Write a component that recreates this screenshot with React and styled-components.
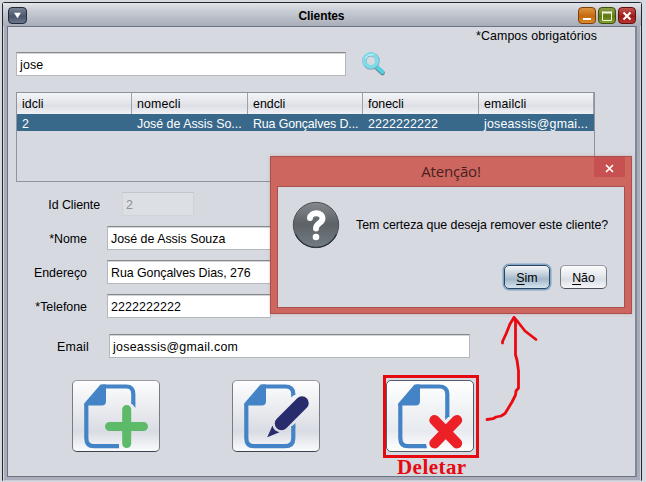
import React from "react";
import styled, { createGlobalStyle, css } from "styled-components";

const GlobalStyle = createGlobalStyle`
  * { box-sizing: border-box; }
  html, body { margin: 0; padding: 0; overflow: hidden; }
  body {
    background: #d6d9e0;
    font: 12.4px/14px "Liberation Sans", Arial, sans-serif;
    color: #000;
  }
  svg { display: block; }
`;

const Screen = styled.main`
  position: relative;
  width: 646px;
  height: 482px;
  padding: 2px 0 0 2px;
  overflow: hidden;
`;

const Frame = styled.section`
  display: flex;
  flex-direction: column;
  width: 640px;
  height: 479px;
  border: 1px solid #23272e;
  border-bottom: 1px solid #c9ccd4;
  border-radius: 3px 3px 0 0;
  background: #a8adb9;
  box-shadow: inset 1px 0 #d3d6dc, inset -1px 0 #d3d6dc;
`;

const TitleBar = styled.header`
  display: grid;
  grid-template-columns: 58px 1fr 58px;
  align-items: center;
  height: 23px;
  padding: 0 5px;
  background: linear-gradient(#e3e5e9, #c8ccd4 35%, #a8adb8);
`;

const Title = styled.h1`
  margin: 3px 0 0 -1px;
  font-size: 12px;
  line-height: 14px;
  letter-spacing: -0.1px;
  text-align: center;
`;

const tones = {
  slate: ["#7a8495", "#4b566b", "#6b778c", "#1f2a3d"],
  orange: ["#dd9440", "#c4690f", "#dd8a2c", "#7e3f08"],
  green: ["#8ea04a", "#5f7a12", "#86a12c", "#3c4f0b"],
  red: ["#c25450", "#9e1b17", "#b8342e", "#5f0f0d"],
};

const FrameButton = styled.button`
  display: grid;
  place-items: center;
  width: ${(p) => (p.$tone === "slate" ? 19 : 18)}px;
  height: 17px;
  margin-top: 2px;
  padding: 0;
  border: 1px solid ${(p) => tones[p.$tone][3]};
  border-radius: 4px;
  background: linear-gradient(
    ${(p) => tones[p.$tone][0]},
    ${(p) => tones[p.$tone][1]} 55%,
    ${(p) => tones[p.$tone][2]}
  );
`;

const FrameButtons = styled.div`
  display: flex;
  gap: 2px;
`;

const Content = styled.div`
  display: flex;
  flex-direction: column;
  width: 630px;
  height: 451px;
  margin-left: 4px;
  padding-left: 8px;
  border: 1px solid #6b7284;
  border-right: 2px solid #7f8798;
  border-bottom: 1px solid #6b7284;
  background: #d6d9e0;
`;

const Text = styled.span`
  letter-spacing: ${(p) => p.$ls || 0}px;
  white-space: pre;
`;

const Required = styled.div`
  width: 581px;
  height: 25px;
  padding-top: 2px;
  text-align: right;
`;

const SearchRow = styled.div`
  display: flex;
  gap: 16px;
  height: 40px;
`;

const Field = styled.div`
  flex: none;
  width: ${(p) => p.$w}px;
  height: 24px;
  padding: 5px 0 0 3px;
  border: 1px solid #b4b7bd;
  border-top: 1px solid #85888d;
  box-shadow: inset 0 1px #d4d5d7;
  background: #fff;
  white-space: nowrap;
  ${(p) =>
    p.$disabled &&
    css`
      color: #8e9196;
      background: #dcdfe3;
      border-color: #d0d3d8;
      border-top-color: #c2c5cb;
      box-shadow: none;
    `}
`;

const Table = styled.div`
  width: 579px;
  height: 90px;
  border: 1px solid #8e939d;
`;

const TableRow = styled.div`
  display: grid;
  grid-template-columns: 115px 116px 115px 116px 115px;
`;

const HeadCell = styled.div`
  height: 21px;
  padding: 4px 0 0 5px;
  border-right: 1px solid #9ba0aa;
  background: linear-gradient(#f4f5f7, #e3e5ea 50%, #dcdfe5 60%, #f1f2f6);
`;

const Cell = styled.div`
  height: 17px;
  padding: 3px 0 0 5px;
  background: #39698a;
  color: #fff;
  overflow: hidden;
`;

const Form = styled.div`
  display: grid;
  grid-template-rows: 34px 34px 34px 40px 46px;
  margin-top: 10px;
`;

const FormRow = styled.div`
  display: flex;
`;

const Label = styled.label`
  width: ${(p) => p.$w}px;
  padding: 6px ${(p) => p.$gap}px 0 0;
  text-align: right;
`;

const Actions = styled.div`
  display: flex;
  padding-left: 56px;
`;

const ActionButton = styled.button`
  display: block;
  flex: none;
  width: 88px;
  height: 72px;
  margin-right: ${(p) => p.$after}px;
  padding: 0;
  border: 1px solid #777b83;
  border-top-color: #9a9da3;
  border-bottom-color: #3d434e;
  border-radius: 5px;
  background: linear-gradient(#fdfdfe, #e7e9ed 45%, #d9dce3 72%, #fafbfd);
  ${(p) =>
    p.$focused &&
    css`
      background: linear-gradient(#fff, #eff1f4 45%, #e7eaef 72%, #fff);
      border-color: #555c68;
    `}
`;

const Dialog = styled.section`
  position: absolute;
  left: 270px;
  top: 156px;
  width: 362px;
  height: 158px;
  padding: 0 6px 6px;
  border: 1px solid #a9504c;
  background: #cd665f;
  box-shadow: 0 0 3px rgba(190, 100, 95, 0.35);
`;

const DialogBar = styled.header`
  display: grid;
  grid-template-columns: 31px 1fr 31px;
  height: 29px;
`;

const DialogTitle = styled.h2`
  grid-column: 2;
  margin: 4px 0 0;
  font: 400 15px/21px "Open Sans", "Noto Sans", sans-serif;
  letter-spacing: -0.2px;
  text-align: center;
  color: #48211f;
`;

const CloseButton = styled.button`
  display: grid;
  place-items: center;
  width: 31px;
  height: 20px;
  padding: 2px 0 0;
  border: 0;
  background: #c75050;
`;

const DialogBody = styled.div`
  display: grid;
  grid-template: 78px 1fr / 78px 1fr;
  height: 122px;
  border: 1px solid #a9504c;
  background: #d6d9e0;
`;

const IconSlot = styled.div`
  padding: 14px 0 0 14px;
`;

const Message = styled.p`
  margin: 0;
  padding-top: 31px;
  white-space: nowrap;
`;

const DialogButtons = styled.div`
  grid-column: 1 / -1;
  display: flex;
  justify-content: flex-end;
  gap: 10px;
  padding-right: 17px;
`;

const DialogButton = styled.button`
  width: ${(p) => p.$w}px;
  height: 24px;
  padding: 2px 0 0;
  border: 1px solid #777b83;
  border-top-color: #9a9da3;
  border-bottom-color: #4a505b;
  border-radius: 5px;
  background: linear-gradient(#fbfbfc, #e6e8ec 45%, #dadde4 60%, #f5f6f9);
  font: inherit;
  color: #000;
  u { text-underline-offset: 2px; text-decoration-thickness: 1px; text-decoration-skip-ink: none; }
  ${(p) =>
    p.$focused &&
    css`
      border-color: #2f4359;
      background: linear-gradient(#f3f6f9, #b9c8d5 45%, #a3b8c9 60%, #d5e4f0);
      box-shadow: 0 0 0 1.5px #7fa5c8;
    `}
`;

const Highlight = styled.div`
  position: absolute;
  left: 383px;
  top: 375px;
  width: 96px;
  height: 83px;
  border: 3px solid #e60a10;
`;

const Caption = styled.div`
  position: absolute;
  left: 397px;
  top: 456px;
  font: bold 21px/22px "Liberation Serif", "Times New Roman", serif;
  letter-spacing: 0.45px;
  color: #e60a10;
`;

const Arrow = styled.svg`
  position: absolute;
  left: 480px;
  top: 312px;
`;

const columns = [
  ["idcli", 0.05, "2", 0],
  ["nomecli", 0.12, "José de Assis So...", 0],
  ["endcli", 0, "Rua Gonçalves D...", -0.12],
  ["fonecli", 0, "2222222222", 0.11],
  ["emailcli", 0.14, "joseassis@gmai...", 0.2],
];

function SearchIcon() {
  return (
    <svg width="24" height="24" viewBox="0 0 24 24">
      <path d="M14 15 L20.500 21" stroke="#5d8794" strokeWidth="4.500" strokeLinecap="round" />
      <path d="M14 14 L20.500 20" stroke="#56cfe0" strokeWidth="4" strokeLinecap="round" />
      <circle cx="9" cy="9" r="6.600" fill="#d6d9e0" stroke="#7aaab6" strokeWidth="4.200" />
      <circle cx="8.700" cy="8.500" r="6.500" fill="none" stroke="#7cdcea" strokeWidth="3.600" />
      <path d="M3.500 6.500 A6.500 6.500 0 0 1 11.500 3" fill="none" stroke="#c1f2f6" strokeWidth="1.200" />
    </svg>
  );
}

function FoldedCorner() {
  return <path d="M27.500 3.400 H33 V20 Q33 24.500 28.500 24.500 H11.200 V22.500 Z" fill="#4484c6" />;
}

function AddIcon() {
  return (
    <svg width="86" height="70" viewBox="0 0 86 70">
      <path d="M29 5.500 H53 Q60.300 5.500 60.300 13 V23" fill="none" stroke="#4484c6" strokeWidth="4.200" />
      <path d="M58.200 22 H62.400 V27 Z" fill="#4484c6" />
      <path d="M13.300 23 V57 Q13.300 65.200 21 65.200 H46" fill="none" stroke="#4484c6" strokeWidth="4.200" />
      <FoldedCorner />
      <path d="M53.700 28.500 V62.500 M36.500 45.500 H70.500" stroke="#5dba68" strokeWidth="9" strokeLinecap="round" />
    </svg>
  );
}

function EditIcon() {
  return (
    <svg width="86" height="70" viewBox="0 0 86 70">
      <path d="M29 5.500 H52 Q60.300 5.500 60.300 13 V14" fill="none" stroke="#4484c6" strokeWidth="4.200" />
      <path d="M13.300 23 V57 Q13.300 65.200 21 65.200 H52 Q60.300 65.200 60.300 57 V45" fill="none" stroke="#4484c6" strokeWidth="4.200" />
      <path d="M58.200 13 H62.400 L58.200 16.500 Z M58.200 46 L62.400 42 V46 Z" fill="#4484c6" />
      <FoldedCorner />
      <path d="M48.500 42.500 L69 22" stroke="#292c6c" strokeWidth="13.500" strokeLinecap="round" />
      <path d="M39.500 44.500 Q40.500 50 46.500 51.200 L34.200 56.300 Z" fill="#292c6c" />
    </svg>
  );
}

function DeleteIcon() {
  return (
    <svg width="86" height="70" viewBox="0 0 86 70">
      <path d="M29 5.500 H52 Q60.300 5.500 60.300 13 V36" fill="none" stroke="#4484c6" strokeWidth="4.200" />
      <path d="M58.200 35 H62.400 L58.200 39 Z" fill="#4484c6" />
      <path d="M13.300 23 V57 Q13.300 65.200 21 65.200 H38" fill="none" stroke="#4484c6" strokeWidth="4.200" />
      <path d="M37.500 63.100 L39 63.100 L40 67.300 H37.500 Z" fill="#4484c6" />
      <FoldedCorner />
      <path d="M47.500 39.200 L70 62.300 M70 39.200 L47.500 62.300" stroke="#ec2027" strokeWidth="10.400" strokeLinecap="round" />
    </svg>
  );
}

function QuestionIcon() {
  return (
    <svg width="48" height="48" viewBox="0 0 48 48">
      <defs>
        <linearGradient id="ball" x1="0" y1="0" x2="0" y2="1">
          <stop offset="0" stopColor="#85898e" />
          <stop offset=".48" stopColor="#5d6267" />
          <stop offset="1" stopColor="#737c84" />
        </linearGradient>
      </defs>
      <circle cx="24" cy="24" r="22.700" fill="url(#ball)" stroke="#4b5158" strokeWidth="1" />
      <path d="M3.500 33 A22.500 22.500 0 0 0 44.500 33" fill="none" stroke="#2d343b" strokeWidth="1.200" />
      <path d="M18 17 C18.500 10.500 30.500 10.500 30.500 17.500 C30.500 22.500 24 22 24 27.500" fill="none" stroke="#fff" strokeWidth="5.900" strokeLinecap="round" />
      <circle cx="24" cy="36" r="3.300" fill="#fff" />
    </svg>
  );
}

export default function App() {
  return (
    <>
      <GlobalStyle />
      <Screen>
        <Frame>
          <TitleBar>
            <FrameButton $tone="slate" aria-label="Menu">
              <svg width="9" height="7" viewBox="0 0 9 7"><path d="M1 .8 H8 L4.500 6.300 Z" fill="#fff" /></svg>
            </FrameButton>
            <Title>Clientes</Title>
            <FrameButtons>
              <FrameButton $tone="orange" aria-label="Minimizar">
                <svg width="12" height="12"><path d="M2 9 H10" stroke="#fff" strokeWidth="2" /></svg>
              </FrameButton>
              <FrameButton $tone="green" aria-label="Maximizar">
                <svg width="12" height="12"><path d="M1.500 1.500 V10.500 H10.500 V1.500" fill="none" stroke="#f3f5e4" /><path d="M1 2.500 H11" stroke="#f3f5e4" strokeWidth="2" /></svg>
              </FrameButton>
              <FrameButton $tone="red" aria-label="Fechar">
                <svg width="12" height="12"><path d="M2.500 2.500 L9.500 9.500 M9.500 2.500 L2.500 9.500" stroke="#fff" strokeWidth="2" /></svg>
              </FrameButton>
            </FrameButtons>
          </TitleBar>
          <Content>
            <Required><Text $ls={0.09}>*Campos obrigatórios</Text></Required>
            <SearchRow>
              <Field $w={330}><Text $ls={0.15}>jose</Text></Field>
              <SearchIcon />
            </SearchRow>
            <Table>
              <TableRow>
                {columns.map(([head, ls]) => (
                  <HeadCell key={head}><Text $ls={ls}>{head}</Text></HeadCell>
                ))}
              </TableRow>
              <TableRow>
                {columns.map(([head, , value, ls]) => (
                  <Cell key={head}><Text $ls={ls}>{value}</Text></Cell>
                ))}
              </TableRow>
            </Table>
            <Form>
              <FormRow>
                <Label $w={106} $gap={22}><Text $ls={-0.07}>Id Cliente</Text></Label>
                <Field $w={72} $disabled>2</Field>
              </FormRow>
              <FormRow>
                <Label $w={91} $gap={20}><Text $ls={0}>*Nome</Text></Label>
                <Field $w={164}><Text $ls={0}>José de Assis Souza</Text></Field>
              </FormRow>
              <FormRow>
                <Label $w={91} $gap={20}><Text $ls={0}>Endereço</Text></Label>
                <Field $w={164}><Text $ls={-0.04}>Rua Gonçalves Dias, 276</Text></Field>
              </FormRow>
              <FormRow>
                <Label $w={91} $gap={20}><Text $ls={0}>*Telefone</Text></Label>
                <Field $w={164}><Text $ls={0.11}>2222222222</Text></Field>
              </FormRow>
              <FormRow>
                <Label $w={93} $gap={20}><Text $ls={0.2}>Email</Text></Label>
                <Field $w={361}><Text $ls={0.27}>joseassis@gmail.com</Text></Field>
              </FormRow>
            </Form>
            <Actions>
              <ActionButton $after={72} aria-label="Adicionar"><AddIcon /></ActionButton>
              <ActionButton $after={66} aria-label="Editar"><EditIcon /></ActionButton>
              <ActionButton $after={0} $focused aria-label="Remover"><DeleteIcon /></ActionButton>
            </Actions>
          </Content>
        </Frame>
        <Dialog>
          <DialogBar>
            <DialogTitle>Atenção!</DialogTitle>
            <CloseButton aria-label="Fechar">
              <svg width="9" height="9"><path d="M1 1 L8 8 M8 1 L1 8" stroke="#fff" strokeWidth="1.700" /></svg>
            </CloseButton>
          </DialogBar>
          <DialogBody>
            <IconSlot><QuestionIcon /></IconSlot>
            <Message><Text $ls={-0.03}>Tem certeza que deseja remover este cliente?</Text></Message>
            <DialogButtons>
              <DialogButton $w={46} $focused><Text><u>S</u>im</Text></DialogButton>
              <DialogButton $w={47}><Text><u>N</u>ão</Text></DialogButton>
            </DialogButtons>
          </DialogBody>
        </Dialog>
        <Highlight />
        <Caption>Deletar</Caption>
        <Arrow width="60" height="112" viewBox="480 312 60 112" fill="none" stroke="#ea0a12" strokeWidth="2.800" strokeLinecap="round" strokeLinejoin="round">
          <path d="M487 419.500 L493 418.700 L496 417 L501 416 L505 413.500 L509 407 L512 402 L515.500 395 L516 391 L518.500 388 V371 L517 360 L515.500 355 V321 L514 317.500 L510 324 L506 334 L502.500 341.500 L502.500 343" />
          <path d="M514 317.500 L518 322 L525 331 L536 339.500" />
        </Arrow>
      </Screen>
    </>
  );
}
